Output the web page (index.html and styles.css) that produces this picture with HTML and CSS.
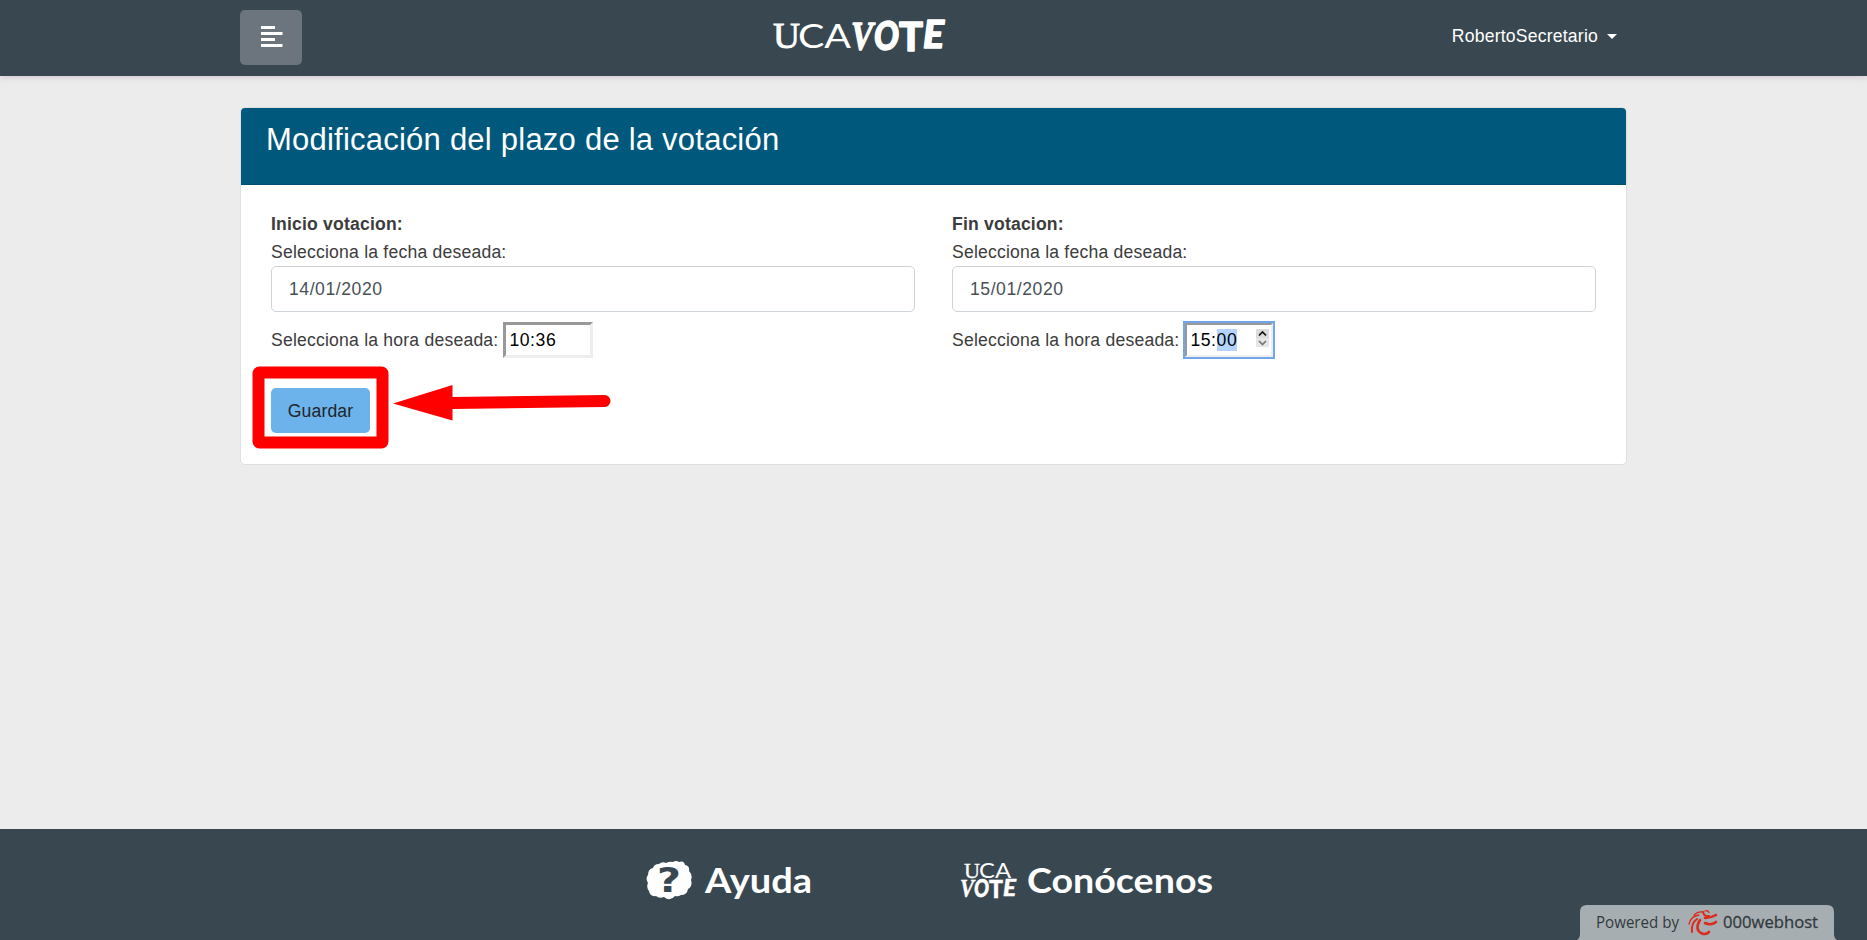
FILE: index.html
```html
<!DOCTYPE html>
<html lang="es">
<head>
<meta charset="utf-8">
<title>UCAVOTE</title>
<link rel="stylesheet" href="styles.css">
</head>
<body>
<header class="navbar">
  <button class="menu-btn" aria-label="Menú">
    <svg width="22" height="22" viewBox="0 0 22 22" fill="#fff"><path d="M0 0h14v3H0zM0 6h21.5v3H0zM0 12h14v3H0zM0 18h21.500v3H0z"/></svg>
  </button>
  <svg class="logo" width="180" height="50" viewBox="0 0 180 50" fill="#fff">
    <text class="serif" x="2" y="38" font-size="35" textLength="27" lengthAdjust="spacingAndGlyphs" stroke="#fff" stroke-width=".8">U</text>
    <text class="thin" x="27" y="38" font-size="33" textLength="53" lengthAdjust="spacingAndGlyphs">CA</text>
    <g class="brush" stroke="#fff" stroke-width="1.4" stroke-linejoin="round">
      <text class="brush-v" x="80" y="39" font-size="41" textLength="22" lengthAdjust="spacingAndGlyphs">V</text>
      <text x="103" y="40" font-size="40" textLength="25" lengthAdjust="spacingAndGlyphs">O</text>
      <text class="upright" x="128" y="41" font-size="39" textLength="24" lengthAdjust="spacingAndGlyphs">T</text>
      <text x="152" y="38" font-size="37" textLength="21" lengthAdjust="spacingAndGlyphs">E</text>
    </g>
  </svg>
  <div class="user"><span>RobertoSecretario</span><i class="caret"></i></div>
</header>
<main class="content">
  <section class="card">
    <h1 class="card-head">Modificación del plazo de la votación</h1>
    <div class="card-body">
      <div class="cols">
        <div class="col">
          <strong class="title">Inicio votacion:</strong>
          <label class="label">Selecciona la fecha deseada:</label>
          <div class="date">14/01/2020</div>
          <div class="time-row"><label>Selecciona la hora deseada:</label><div class="time"><span>10:36</span></div></div>
        </div>
        <div class="col">
          <strong class="title">Fin votacion:</strong>
          <label class="label">Selecciona la fecha deseada:</label>
          <div class="date">15/01/2020</div>
          <div class="time-row"><label>Selecciona la hora deseada:</label><div class="time focused"><span>15:</span><span class="sel">00</span>
            <svg class="spin" width="13" height="18" viewBox="0 0 13 18"><path fill="#dcdcdc" d="M0 0h13v9H0z"/><path fill="#e6e6e6" d="M0 9h13v9H0z"/><path d="M3 6.500l3.500-3.500 3.500 3.500" fill="none" stroke="#111" stroke-width="1.7"/><path d="M3 12l3.500 3.500 3.500-3.500" fill="none" stroke="#777" stroke-width="1.700"/></svg>
          </div></div>
        </div>
      </div>
      <div class="action">
        <button class="save">Guardar</button>
        <svg class="mark" width="362" height="84" viewBox="0 0 362 84">
          <rect x="6.500" y="6.500" width="124" height="70" rx="1" fill="none" stroke="red" stroke-width="12" stroke-linejoin="round"/>
          <path d="M141 37.500L200.500 19v12l152-2a6 6 0 0 1 0 12l-152 2v11.500z" fill="red"/>
        </svg>
      </div>
    </div>
  </section>
</main>
<footer class="footer">
  <a class="foot-link">
    <svg width="46" height="40" viewBox="0 0 46 40"><path fill="#fff" d="M7 7Q8 3 13 3Q16 0 20 2Q24 0 27 1Q30-1 33 1Q38-1 39 4Q44 5 43 10Q47 14 45 19Q47 25 42 28Q41 34 35 34Q32 36 29 35Q24 41 18 36Q13 38 10 35Q4 36 3 30Q0 26 2 22Q-1 17 2 14Q2 8 7 7Z"/><text class="question" x="11" y="31" font-size="34" textLength="24" lengthAdjust="spacingAndGlyphs">?</text></svg>
    <svg class="foot-text" width="108" height="40"><text x="0" y="32" textLength="107" lengthAdjust="spacingAndGlyphs">Ayuda</text></svg>
  </a>
  <a class="foot-link">
    <svg class="mini" width="58" height="40" viewBox="0 0 58 40" fill="#fff">
      <text class="serif" x="4" y="17" font-size="22" textLength="16" lengthAdjust="spacingAndGlyphs" stroke="#fff" stroke-width=".3">U</text>
      <text class="thin" x="19" y="17" font-size="21" textLength="32" lengthAdjust="spacingAndGlyphs">CA</text>
      <g class="brush" stroke="#fff" stroke-width=".5">
        <text class="brush-v" x="0" y="36" font-size="26" textLength="14" lengthAdjust="spacingAndGlyphs">V</text>
        <text x="14" y="36" font-size="24" textLength="15" lengthAdjust="spacingAndGlyphs">O</text>
        <text class="upright" x="29" y="37" font-size="25" textLength="14" lengthAdjust="spacingAndGlyphs">T</text>
        <text x="43" y="35" font-size="23" textLength="13" lengthAdjust="spacingAndGlyphs">E</text>
      </g>
    </svg>
    <svg class="foot-text" width="188" height="40"><text x="0" y="32" textLength="186" lengthAdjust="spacingAndGlyphs">Conócenos</text></svg>
  </a>
  <svg class="host" width="260" height="36" viewBox="0 0 260 36">
    <path fill="#a7aeb1" d="M0 36Q3 34 3 30V8Q3 1 10 1H250Q257 1 257 8V30Q257 34 260 36Z"/>
    <text class="powered" x="19" y="24" font-size="16" textLength="83" lengthAdjust="spacingAndGlyphs">Powered by</text>
    <g fill="none" stroke="#dc2a1c" stroke-linecap="round">
      <path stroke-width="1.300" d="M126 8Q121 7 117 11M122 11Q114 12 112 20M132 8.500Q131 6 128 7"/>
      <path stroke-width="2" d="M120 15Q114 19 115 28M132 12Q127 13 126 8"/>
      <path stroke-width="2.600" d="M139 11Q134 14 128 14M139 18Q134 22 128 19M123 16Q117 26 125 29.500Q129 31 132 28"/>
    </g>
    <text class="hostname" x="146" y="24" font-size="17" textLength="95" lengthAdjust="spacingAndGlyphs">000webhost</text>
  </svg>
</footer>
</body>
</html>
```

FILE: styles.css
```css
* { box-sizing: border-box; }
body {
  margin: 0;
  height: 940px;
  display: flex;
  flex-direction: column;
  overflow: hidden;
  background: #ececec;
  color: #3c3c3c;
  font: 17.6px/28px "Liberation Sans", Arial, sans-serif;
}
button { font: inherit; border: 0; }
.navbar {
  height: 76px;
  flex: none;
  display: flex;
  align-items: flex-start;
  padding: 10px 250px 0 240px;
  background: #394850;
  box-shadow: 0 2px 6px rgba(150, 110, 150, .25);
}
.menu-btn {
  display: flex;
  width: 62px;
  height: 55px;
  padding: 16px 0 0 21px;
  border-radius: 5px;
  background: #6c757d;
}
.logo { margin-left: 469px; overflow: visible; }
.mini { overflow: visible; }
.serif { font-family: "Liberation Serif", serif; }
.thin { font-family: Lato, sans-serif; }
.brush { font-family: Lato, sans-serif; font-weight: 900; font-style: italic; }
.brush-v { font-family: "Liberation Serif", serif; font-weight: 700; }
.upright { font-style: normal; }
.user {
  display: flex;
  align-items: center;
  gap: 9px;
  margin-left: auto;
  padding-top: 12px;
  color: #fff;
  line-height: 28px;
}
.user span { letter-spacing: .2px; }
.caret { border: 5.5px solid transparent; border-top-color: #fff; border-bottom: 0; }
.content { flex: 1; padding: 31px 240px 0; }
.card {
  height: 358px;
  border: 1px solid #dfdfdf;
  border-radius: 5px;
  background: #fff;
  overflow: hidden;
}
.card-head {
  margin: -1px 0 0;
  height: 78px;
  padding: 14px 25px 0;
  background: #00587c;
  border-bottom: 1px solid #004f70;
  color: #fff;
  font-weight: 400;
  font-size: 31px;
  line-height: 37px;
  letter-spacing: .23px;
}
.card-body { padding: 25px 30px 0; }
.cols { display: grid; grid-template-columns: 1fr 1fr; gap: 37px; }
.title, .label { display: block; }
.title { letter-spacing: .18px; }
.label, .time-row label { letter-spacing: .2px; }
.date {
  height: 46px;
  padding: 8px 17px;
  border: 1px solid #ced4da;
  border-radius: 5px;
  color: #495057;
  letter-spacing: .55px;
}
.time-row { display: flex; align-items: center; gap: 5px; margin-top: 10px; height: 36px; }
.time {
  display: flex;
  align-items: center;
  width: 90px;
  height: 36px;
  padding-left: 3px;
  border: 3px solid;
  border-color: #999 #eee #eee #999;
  color: #000;
  letter-spacing: .55px;
}
.focused { outline: 2px solid #72a5ec; outline-offset: -1px; }
.sel { background: #b3d4ff; line-height: 22px; }
.spin { margin: -4px 2px 0 auto; }
.action { position: relative; margin-top: 30px; }
.save {
  display: block;
  width: 99px;
  height: 45px;
  padding: 0;
  border-radius: 5px;
  background: #6cb2eb;
  color: #212529;
  letter-spacing: .15px;
}
.mark { position: absolute; left: -19px; top: -22px; }
.footer {
  position: relative;
  height: 111px;
  flex: none;
  display: flex;
  gap: 147px;
  padding: 32px 0 0 646px;
  background: #394850;
}
.foot-link { display: flex; height: 40px; gap: 13px; }
.foot-link + .foot-link { gap: 9px; }
.foot-text { fill: #fff; font-family: Lato, sans-serif; font-weight: 700; font-size: 34px; overflow: visible; }
.question { font-family: "DejaVu Sans", sans-serif; font-weight: 700; fill: #394850; }
.host { position: absolute; right: 30px; bottom: 0; }
.powered { font-family: "Open Sans", sans-serif; font-weight: 400; fill: #333a3e; }
.hostname { font-family: "Open Sans", sans-serif; font-weight: 400; fill: #333a3e; stroke: #333a3e; stroke-width: .3; }
```
